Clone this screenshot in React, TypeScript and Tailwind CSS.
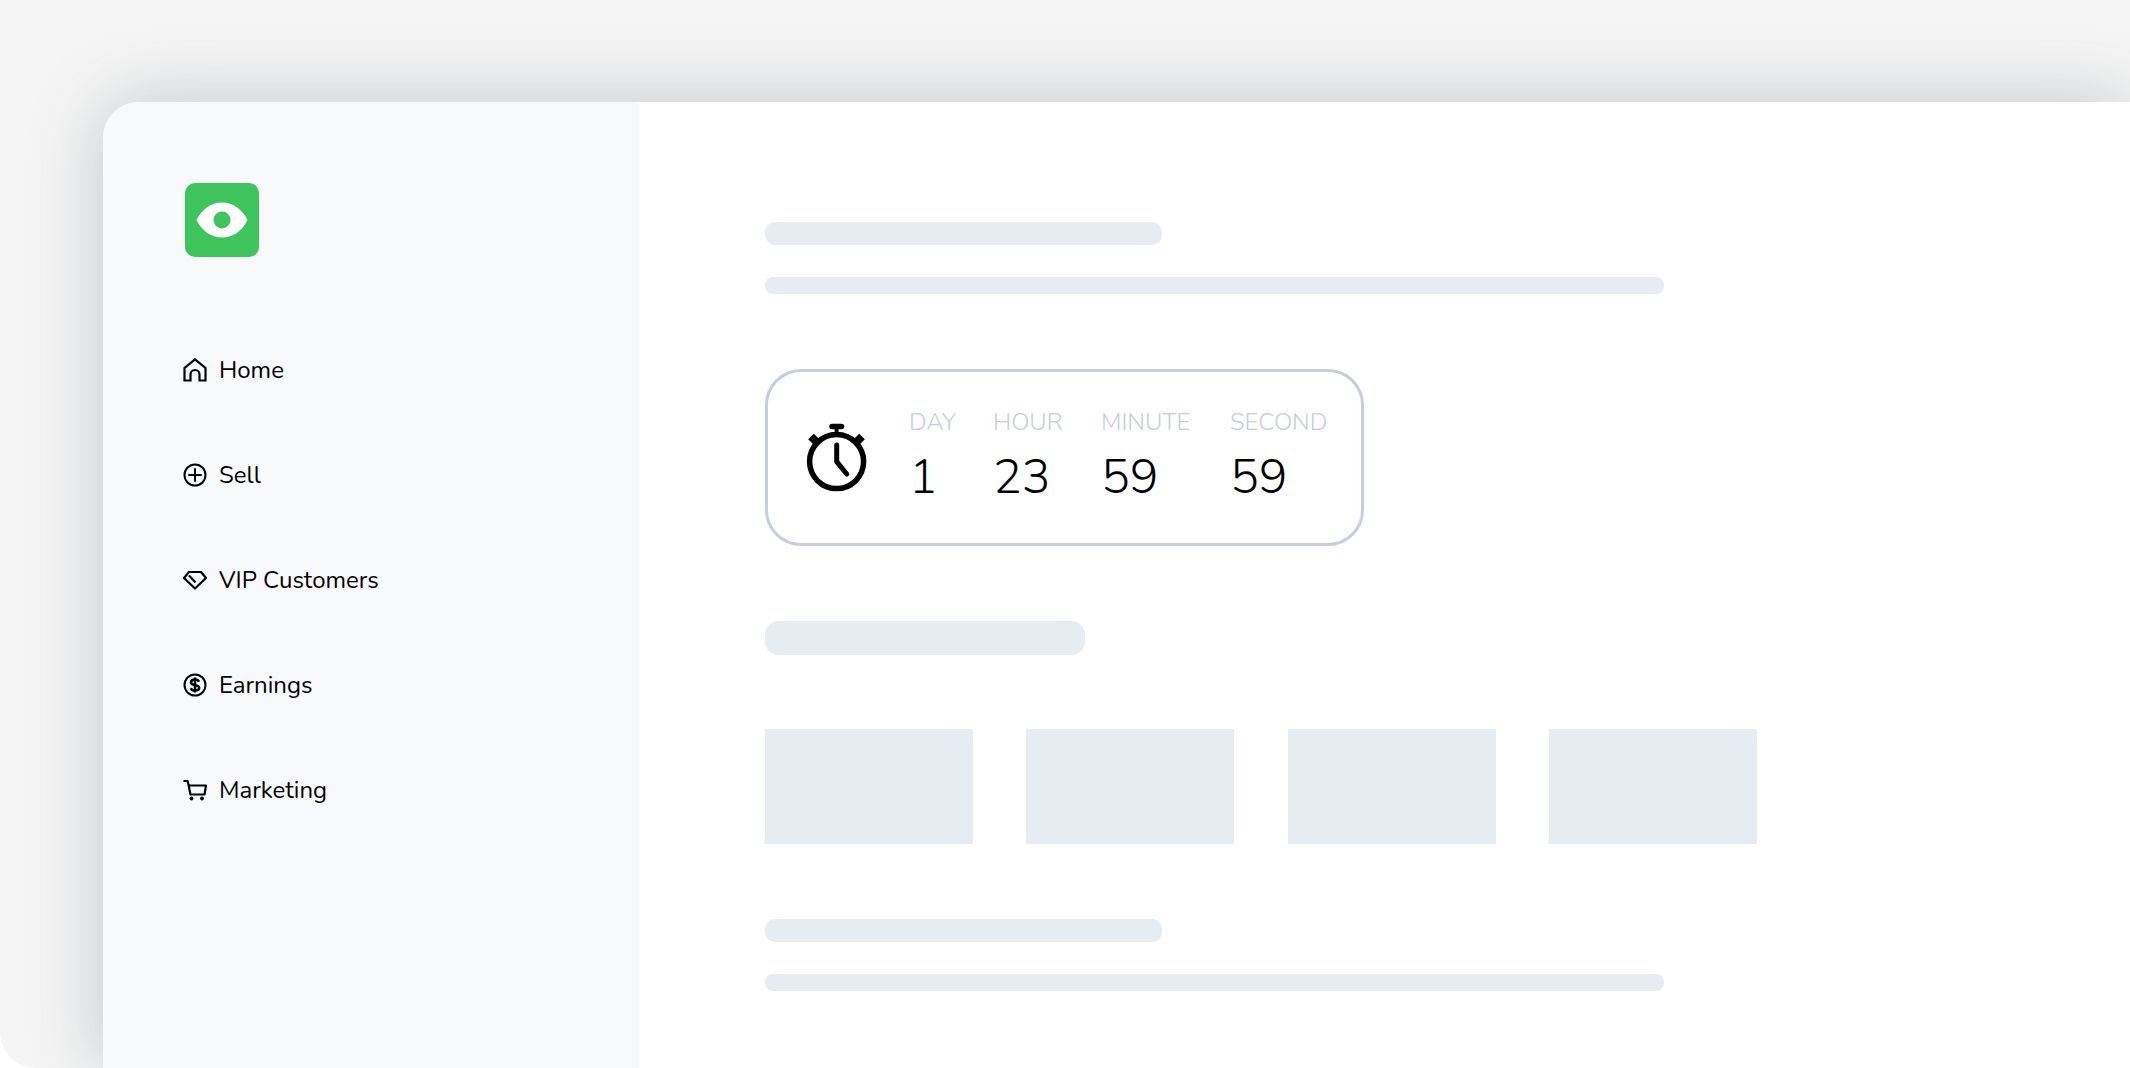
import React from 'react'

const font = { fontFamily: 'Nunito, Lato, "Noto Sans", sans-serif' }

function HomeIcon() {
  return (
    <svg width="24" height="24" viewBox="0 0 24 24" fill="none" stroke="currentColor" strokeWidth="2.2">
      <path d="M1.5 22.5V10L12 1.5 22.5 10v12.5h-6v-6a4.5 4.5 0 0 0-9 0v6z" strokeLinejoin="miter" />
    </svg>
  )
}

function PlusIcon() {
  return (
    <svg width="24" height="24" viewBox="0 0 24 24" fill="none" stroke="currentColor" strokeWidth="2">
      <circle cx="12" cy="12" r="10.5" />
      <path d="M12 6v12M6 12h12" strokeLinecap="round" />
    </svg>
  )
}

function DiamondIcon() {
  return (
    <svg width="24" height="24" viewBox="0 0 24 24" fill="none" stroke="currentColor" strokeWidth="2.2">
      <path d="M6 4h12l5 6L12 20.5 1 10z" strokeLinejoin="round" />
      <path d="M6 7.5l6.5 7" />
    </svg>
  )
}

function DollarIcon() {
  return (
    <svg width="24" height="24" viewBox="0 0 24 24" fill="none" stroke="currentColor">
      <circle cx="12" cy="12" r="10.5" strokeWidth="2" />
      <path d="M16 8.8c-.6-1.4-2-2.2-4-2.2-2.3 0-4 1.1-4 2.8 0 3.8 8.2 1.7 8.2 5.4 0 1.7-1.8 2.8-4.2 2.8-2 0-3.6-.9-4.2-2.4M12 4.6v14.8" strokeWidth="2.5" />
    </svg>
  )
}

function CartIcon() {
  return (
    <svg width="24" height="24" viewBox="0 0 24 24" fill="none" stroke="currentColor" strokeWidth="2.2">
      <path d="M0.5 3h4.2l2.8 13.5h14L23 7.5H5.5" strokeLinejoin="round" />
      <circle cx="8.5" cy="20.5" r="1.9" fill="currentColor" stroke="none" />
      <circle cx="19" cy="20.5" r="1.9" fill="currentColor" stroke="none" />
    </svg>
  )
}

function Stopwatch() {
  return (
    <svg width="66" height="75" viewBox="0 0 66 75" fill="none" stroke="black">
      <circle cx="32.6" cy="41.6" r="27" strokeWidth="5.5" />
      <path d="M28 6.5h9.5" strokeWidth="5.5" strokeLinecap="round" />
      <path d="M32.6 7v8" strokeWidth="4" />
      <path d="M7 16.5l5.5 5.5M58 16.5l-5.5 5.5" strokeWidth="8" />
      <path d="M32.7 25v16.7l10 12.3" strokeWidth="5" strokeLinecap="round" strokeLinejoin="round" />
    </svg>
  )
}

const navItems = [
  { label: 'Home', icon: <HomeIcon /> },
  { label: 'Sell', icon: <PlusIcon /> },
  { label: 'VIP Customers', icon: <DiamondIcon /> },
  { label: 'Earnings', icon: <DollarIcon /> },
  { label: 'Marketing', icon: <CartIcon /> }
]

const units = [
  { label: 'DAY', value: '1', width: 'w-[84px]' },
  { label: 'HOUR', value: '23', width: 'w-[108px]' },
  { label: 'MINUTE', value: '59', width: 'w-[129px]' },
  { label: 'SECOND', value: '59', width: 'w-[100px]' }
]

export default function App() {
  return (
    <div className="h-[1068px] w-full overflow-hidden bg-white" style={font}>
      <div className="h-full overflow-hidden rounded-bl-[36px] bg-[#f5f5f5] pl-[103px] pt-[102px]">
        <div className="flex h-full overflow-hidden rounded-tl-[36px] bg-white shadow-[0_0_75px_rgba(60,75,90,0.28)]">
          {/* Sidebar */}
          <aside className="w-[536px] shrink-0 bg-[#f8f9fb] pl-[82px] pt-[81px]">
            <div className="flex h-[74px] w-[74px] items-center justify-center rounded-[10px] bg-[#3fc35c]">
              <svg width="52" height="36" viewBox="0 0 52 36">
                <path d="M0.5 18C6 7 15 0.5 26 0.5S46 7 51.5 18C46 29 37 35.5 26 35.5S6 29 0.5 18z" fill="white" />
                <circle cx="26" cy="18" r="8.5" fill="#3fc35c" />
              </svg>
            </div>
            <nav className="mt-[100px] flex flex-col gap-[79px]">
              {navItems.map((item) => (
                <div key={item.label} className="flex h-[26px] items-center text-[24px] text-black">
                  <span className="-ml-[2px] mr-[12px] flex h-[24px] w-[24px] items-center justify-center">
                    {item.icon}
                  </span>
                  {item.label}
                </div>
              ))}
            </nav>
          </aside>

          {/* Main */}
          <main className="flex-1 pl-[126px] pt-[120px]">
            <div className="h-[23px] w-[397px] rounded-[10px] bg-[#e7ebf2]" />
            <div className="mt-[32px] h-[17px] w-[899px] rounded-[8px] bg-[#e7ebf2]" />

            <div className="mt-[75px] flex h-[177px] w-[599px] items-center rounded-[36px] border-[3px] border-[#c8cddd] pl-[36px]">
              <Stopwatch />
              <div className="ml-[39px] -mt-[3px] flex">
                {units.map((unit) => (
                  <div key={unit.label} className={unit.width}>
                    <div className="text-[24px] font-light leading-[30px] text-[#c8cddd]">{unit.label}</div>
                    <div className="mt-[11px] text-[48px] font-[350] leading-[58px] text-black">{unit.value}</div>
                  </div>
                ))}
              </div>
            </div>

            <div className="mt-[75px] h-[34px] w-[320px] rounded-[14px] bg-[#e7ebf2]" />

            <div className="mt-[74px] flex gap-[53.3px]">
              <div className="h-[115px] w-[208px] bg-[#e7ebf2]" />
              <div className="h-[115px] w-[208px] bg-[#e7ebf2]" />
              <div className="h-[115px] w-[208px] bg-[#e7ebf2]" />
              <div className="h-[115px] w-[208px] bg-[#e7ebf2]" />
            </div>

            <div className="mt-[75px] h-[23px] w-[397px] rounded-[10px] bg-[#e7ebf2]" />
            <div className="mt-[32px] h-[17px] w-[899px] rounded-[8px] bg-[#e7ebf2]" />
          </main>
        </div>
      </div>
    </div>
  )
}
